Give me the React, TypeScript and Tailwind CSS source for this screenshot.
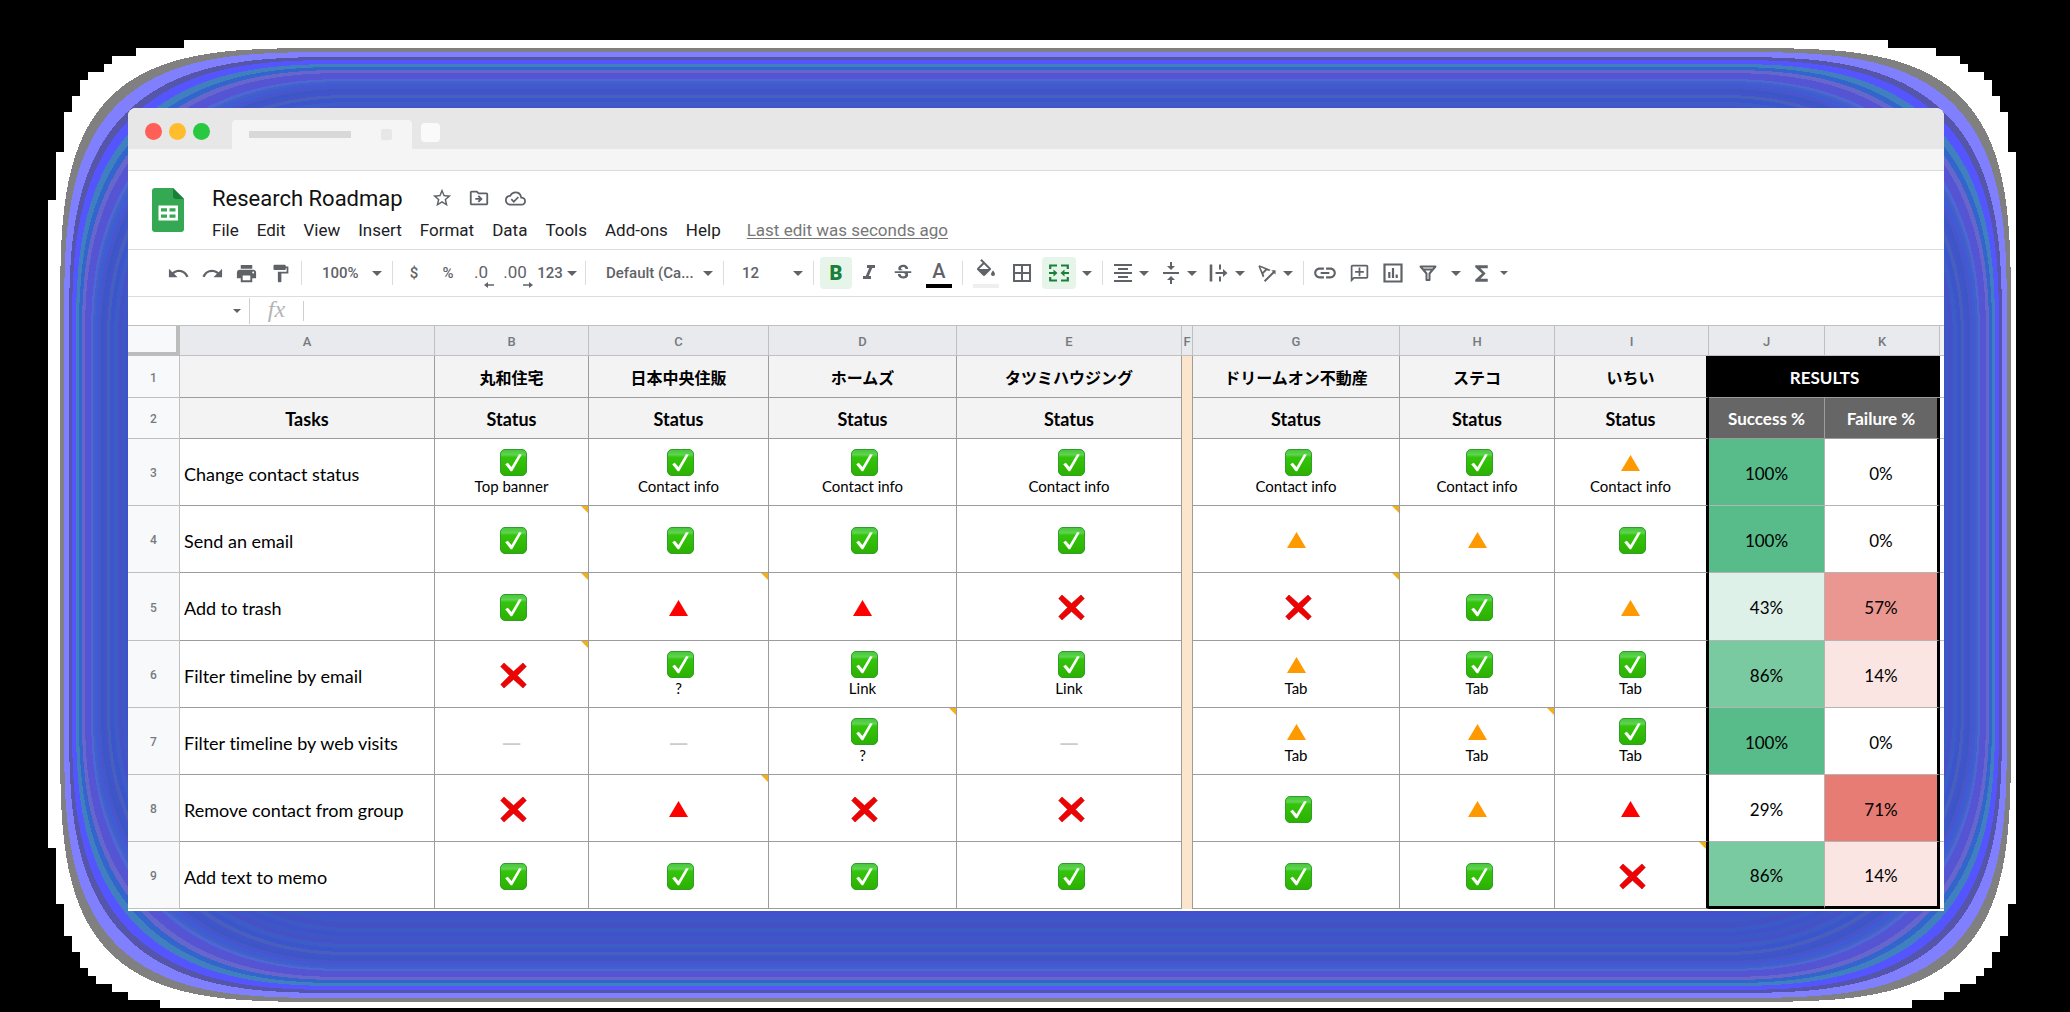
import React from "react";
import {
  MdUndo,
  MdRedo,
  MdPrint,
  MdFormatPaint,
  MdFormatItalic,
  MdStrikethroughS,
  MdBorderAll,
  MdFormatAlignCenter,
  MdVerticalAlignCenter,
  MdTextRotationAngleup,
  MdLink,
  MdOutlineAddComment,
  MdOutlineInsertChart,
  MdFunctions,
  MdStarBorder,
  MdOutlineDriveFileMove,
  MdOutlineCloudDone,
} from "react-icons/md";

/* ---------- Backdrop glow ---------- */

const BANDS: [number, number, string][] = [
  [48, 3.7, "#808080"],
  [52, 3.4, "#8080ff"],
  [57, 3.1, "#5555aa"],
  [60, 2.95, "#5555ff"],
  [64, 2.78, "#4080bf"],
  [67, 2.65, "#3366cc"],
  [70, 2.57, "#6666cc"],
  [73, 2.5, "#5555d4"],
  [79, 2.4, "#4c68d8"],
  [81, 2.36, "#4760c4"],
  [83, 2.33, "#3d5cd6"],
  [86, 2.28, "#4a55cc"],
  [89, 2.25, "#3a57c6"],
  [92, 2.22, "#4453cb"],
  [95, 2.2, "#4560bd"],
  [98, 2.17, "#3c54cc"],
  [102, 2.14, "#3d5cc6"],
  [106, 2.1, "#4650c8"],
  [110, 2.08, "#3d57c4"],
  [114, 2.06, "#3f52cc"],
  [118, 2.04, "#3c5ac4"],
  [122, 2.02, "#4450c6"],
  [127, 2, "#3d57c4"],
  [132, 2, "#4052cc"],
];

function bandPath(top: number, n: number) {
  const left = top + 12;
  const cx = 350;
  const cy = 340;
  const a = cx - left;
  const b = cy - top;
  const quarter: [number, number][] = [];
  for (let i = 0; i <= 48; i++) {
    const t = (i / 48) * (Math.PI / 2);
    quarter.push([
      cx - a * Math.pow(Math.max(0, Math.cos(t)), 2 / n),
      cy - b * Math.pow(Math.max(0, Math.sin(t)), 2 / n),
    ]);
  }
  const back = [...quarter].reverse();
  const all = [
    ...quarter,
    ...back.map(([x, y]) => [2071 - x, y]),
    ...quarter.map(([x, y]) => [2071 - x, 1050 - y]),
    ...back.map(([x, y]) => [x, 1050 - y]),
  ];
  return "M" + all.map(([x, y]) => `${x.toFixed(1)} ${y.toFixed(1)}`).join("L") + "Z";
}

function Backdrop() {
  return (
    <svg
      className="absolute inset-0 h-full w-full"
      viewBox="0 0 2070 1012"
      preserveAspectRatio="none"
      shapeRendering="crispEdges"
      aria-hidden="true"
    >
      <path
        fill="#fff"
        d="M184 40H1888V48H1936V56H1960V64H1968V72H1984V80H1992V96H2000V112H2008V152H2016V904H2008V936H2000V952H1992V968H1984V976H1976V984H1960V992H1944V1000H1912V1008H160V1000H128V992H112V984H96V976H88V968H80V952H72V936H64V904H56V848H48V200H56V152H64V112H72V96H80V80H88V72H104V64H112V56H136V48H184Z"
      />
      {BANDS.map(([top, n, color]) => (
        <path key={top} d={bandPath(top, n)} fill={color} />
      ))}
    </svg>
  );
}

/* ---------- Small drawings ---------- */

function Caret({ small = false }: { small?: boolean }) {
  return (
    <svg className={small ? "h-1 w-2 shrink-0" : "h-[5px] w-2.5 shrink-0"} viewBox="0 0 10 5" preserveAspectRatio="none" aria-hidden="true">
      <path d="M0 0h10L5 5z" fill="#5f6368" />
    </svg>
  );
}

function Check() {
  return (
    <svg className="ml-1 h-[27px] w-[27px]" viewBox="0 0 27 27" role="img" aria-label="Passed">
      <defs>
        <linearGradient id="chk" x1="0" y1="0" x2="0" y2="1">
          <stop offset="0" stopColor="#46c53a" />
          <stop offset="0.2" stopColor="#5fd44f" />
          <stop offset="0.3" stopColor="#34c40c" />
          <stop offset="1" stopColor="#2cb000" />
        </linearGradient>
      </defs>
      <rect x="0.5" y="0.5" width="26" height="26" rx="4.5" fill="url(#chk)" stroke="#2f9e2a" />
      <path d="M5.2 15.2l2.6-1.5 3.7 4.2L19 5.2l2.8.3-9.6 16.7h-1.5z" fill="#fff" />
    </svg>
  );
}

function Cross() {
  return (
    <svg className="ml-1 h-[27px] w-[27px]" viewBox="0 0 27 27" role="img" aria-label="Failed">
      <path
        d="M4 1L13.5 9.6 23 1l3.3 3.6-8.9 8.9 8.9 8.9L23 26l-9.500-8.600L4 26 .7 22.400l8.900-8.900L.7 4.600z"
        fill="#ec0404"
        stroke="#d40000"
        strokeWidth="0.6"
        strokeLinejoin="round"
      />
    </svg>
  );
}

function Triangle({ color, label }: { color: string; label: string }) {
  return (
    <span className="flex h-[27px] items-center">
      <svg className="h-4 w-[19px]" viewBox="0 0 19 16" role="img" aria-label={label}>
        <path d="M9.500 0L19 16H0z" fill={color} />
      </svg>
    </span>
  );
}

/* ---------- Toolbar ---------- */

const Sep = () => <span className="mx-1 h-6 w-px shrink-0 bg-[#dadce0]" />;

function Tool({ label, className = "w-[34px]", children }: { label: string; className?: string; children: React.ReactNode }) {
  return (
    <button type="button" aria-label={label} className={`flex h-8 shrink-0 items-center justify-center ${className}`}>
      {children}
    </button>
  );
}

function MenuTool({ label, children }: { label: string; children: React.ReactNode }) {
  return (
    <button type="button" aria-label={label} className="flex h-8 w-12 shrink-0 items-center gap-1 pl-1">
      {children}
      <Caret />
    </button>
  );
}

function Picker({ label, value, className }: { label: string; value: string; className: string }) {
  return (
    <label className={`flex h-8 shrink-0 items-center pr-1.5 ${className}`}>
      <select aria-label={label} className="min-w-0 flex-1 appearance-none bg-transparent outline-none">
        <option>{value}</option>
      </select>
      <Caret />
    </label>
  );
}

function Decimals({ text, right }: { text: string; right?: boolean }) {
  return (
    <span className="relative text-[17px] font-normal">
      {text}
      <svg className="absolute -right-1.5 -bottom-0.5 h-1.5 w-2.5" viewBox="0 0 10 6" aria-hidden="true">
        <path d={right ? "M0 2.200h6V0l4 3-4 3V3.800H0z" : "M10 2.200H4V0L0 3l4 3V3.800h6z"} fill="#5f6368" />
      </svg>
    </span>
  );
}

function Toolbar() {
  return (
    <div role="toolbar" className="flex h-[47px] items-center overflow-hidden border-b border-[#dcdcdc] pl-[33px] text-[15px] font-medium text-[#5f6368]">
      <Tool label="Undo"><MdUndo size={23} /></Tool>
      <Tool label="Redo"><MdRedo size={23} /></Tool>
      <Tool label="Print"><MdPrint size={23} /></Tool>
      <Tool label="Paint format"><MdFormatPaint size={21} /></Tool>
      <Sep />
      <Picker label="Zoom" value="100%" className="w-[82px] pl-4" />
      <Sep />
      <Tool label="Format as currency">$</Tool>
      <Tool label="Format as percent">%</Tool>
      <Tool label="Decrease decimal places" className="w-8"><Decimals text=".0" /></Tool>
      <Tool label="Increase decimal places" className="w-9"><Decimals text=".00" right /></Tool>
      <Tool label="More formats" className="w-12 gap-1">123<Caret /></Tool>
      <Sep />
      <Picker label="Font" value="Default (Ca..." className="w-[129px] pl-4" />
      <Sep />
      <Picker label="Font size" value="12" className="w-[81px] pl-3.5" />
      <Sep />
      <Tool label="Bold" className="ml-0.5 w-8 rounded-sm bg-[#e6f4ea] text-xl font-black text-[#188038]">B</Tool>
      <Tool label="Italic"><MdFormatItalic size={24} /></Tool>
      <Tool label="Strikethrough"><MdStrikethroughS size={22} /></Tool>
      <Tool label="Text color" className="w-[38px]">
        <span className="flex w-[26px] flex-col items-center border-b-4 border-black text-xl leading-[25px]">A</span>
      </Tool>
      <Sep />
      <Tool label="Fill color" className="w-[38px]">
        <span className="flex w-[26px] flex-col items-center border-b-4 border-[#efefef] pb-[5px]">
          <svg className="h-5 w-6" viewBox="0 0 24 20" aria-hidden="true">
            <path
              fill="#5f6368"
              d="M16.560 8.940L7.620 0 6.210 1.410l2.380 2.380-5.150 5.150c-.590.590-.590 1.540 0 2.120l5.500 5.500c.290.290.680.440 1.060.440s.770-.150 1.060-.440l5.500-5.500c.590-.580.590-1.530 0-2.120zM5.210 10L10 5.210 14.790 10zM19 11.500s-2 2.170-2 3.500c0 1.100.900 2 2 2s2-.900 2-2c0-1.330-2-3.500-2-3.500z"
            />
          </svg>
        </span>
      </Tool>
      <Tool label="Borders"><MdBorderAll size={24} /></Tool>
      <Tool label="Merge cells" className="ml-[3px] w-[34px] rounded-sm bg-[#e6f4ea]">
        <svg className="h-6 w-6" viewBox="0 0 24 24" fill="none" stroke="#188038" strokeWidth="2.200" aria-hidden="true">
          <path d="M10 4.500H3.200V8M14 4.500h6.800V8M10 19.500H3.200V16M14 19.500h6.800V16M2 12h5M22 12h-5" />
          <path d="M6.500 8.500L10.500 12l-4 3.500zM17.500 8.500L13.500 12l4 3.500z" fill="#188038" stroke="none" />
        </svg>
      </Tool>
      <Tool label="Merge options" className="w-[22px]"><Caret /></Tool>
      <Sep />
      <MenuTool label="Horizontal align"><MdFormatAlignCenter size={24} /></MenuTool>
      <MenuTool label="Vertical align"><MdVerticalAlignCenter size={24} /></MenuTool>
      <MenuTool label="Text wrapping">
        <svg className="h-6 w-6" viewBox="0 0 24 24" fill="none" stroke="#5f6368" strokeWidth="2" aria-hidden="true">
          <path d="M4 3.500v17" strokeWidth="2.600" />
          <path d="M13 3.500v5M13 15.500v5M8.500 12H18" />
          <path d="M16 8l4.500 4-4.500 4z" fill="#5f6368" stroke="none" />
        </svg>
      </MenuTool>
      <MenuTool label="Text rotation"><MdTextRotationAngleup size={24} /></MenuTool>
      <Sep />
      <Tool label="Insert link"><MdLink size={26} /></Tool>
      <Tool label="Insert comment"><MdOutlineAddComment size={21} className="-scale-x-100" /></Tool>
      <Tool label="Insert chart">
        <svg className="h-5 w-5" viewBox="0 0 20 20" fill="none" stroke="#5f6368" strokeWidth="2.200" aria-hidden="true">
          <path d="M1.500 1.500h17v17h-17zM6.300 15V9M10 15V5M13.700 15v-3.500" />
        </svg>
      </Tool>
      <Tool label="Filter" className="w-9">
        <svg className="h-5 w-5" viewBox="0 0 20 20" fill="none" stroke="#5f6368" strokeWidth="2" aria-hidden="true">
          <path d="M2.500 3.500h15l-6 7V17h-3v-6.500zM5 6.500h10" strokeLinejoin="round" />
        </svg>
      </Tool>
      <Tool label="Filter views" className="w-5"><Caret /></Tool>
      <Tool label="Functions" className="w-[30px]"><MdFunctions size={25} /></Tool>
      <Tool label="More functions" className="w-4"><Caret small /></Tool>
    </div>
  );
}

/* ---------- Sheet ---------- */

type Mark = "ok" | "no" | "warn" | "bad" | "none";
type Cell = [mark: Mark, text?: string, note?: boolean];

const COLS = [
  "w-[52px]", "w-[255px]", "w-[154px]", "w-[180px]", "w-[188px]", "w-[225px]", "w-[11px]",
  "w-[207px]", "w-[155px]", "w-[154px]", "w-[116px]", "w-[115px]", "w-[4px]",
];
const LETTERS = ["A", "B", "C", "D", "E", "F", "G", "H", "I", "J", "K"];
const COMPANIES = ["丸和住宅", "日本中央住販", "ホームズ", "タツミハウジング", "ドリームオン不動産", "ステコ", "いちい"];

const ROWS: { task: string; cells: Cell[]; ok: [string, string]; fail: [string, string] }[] = [
  {
    task: "Change contact status",
    cells: [["ok", "Top banner"], ["ok", "Contact info"], ["ok", "Contact info"], ["ok", "Contact info"], ["ok", "Contact info"], ["ok", "Contact info"], ["warn", "Contact info"]],
    ok: ["100%", "bg-[#57bb8a]"],
    fail: ["0%", "bg-white"],
  },
  {
    task: "Send an email",
    cells: [["ok", "", true], ["ok"], ["ok"], ["ok"], ["warn", "", true], ["warn"], ["ok"]],
    ok: ["100%", "bg-[#57bb8a]"],
    fail: ["0%", "bg-white"],
  },
  {
    task: "Add to trash",
    cells: [["ok", "", true], ["bad", "", true], ["bad"], ["no"], ["no", "", true], ["ok"], ["warn"]],
    ok: ["43%", "bg-[#def1e8]"],
    fail: ["57%", "bg-[#eb9791]"],
  },
  {
    task: "Filter timeline by email",
    cells: [["no", "", true], ["ok", "?"], ["ok", "Link"], ["ok", "Link"], ["warn", "Tab"], ["ok", "Tab"], ["ok", "Tab"]],
    ok: ["86%", "bg-[#79c9a1]"],
    fail: ["14%", "bg-[#fae5e3]"],
  },
  {
    task: "Filter timeline by web visits",
    cells: [["none"], ["none"], ["ok", "?", true], ["none"], ["warn", "Tab"], ["warn", "Tab", true], ["ok", "Tab"]],
    ok: ["100%", "bg-[#57bb8a]"],
    fail: ["0%", "bg-white"],
  },
  {
    task: "Remove contact from group",
    cells: [["no"], ["bad", "", true], ["no"], ["no"], ["ok"], ["warn"], ["bad"]],
    ok: ["29%", "bg-white"],
    fail: ["71%", "bg-[#e67c73]"],
  },
  {
    task: "Add text to memo",
    cells: [["ok"], ["ok"], ["ok"], ["ok"], ["ok"], ["ok"], ["no", "", true]],
    ok: ["86%", "bg-[#79c9a1]"],
    fail: ["14%", "bg-[#fae5e3]"],
  },
];

function StatusCell({ cell, last }: { cell: Cell; last: boolean }) {
  const [mark, text, note] = cell;
  return (
    <td className={`relative border-b border-b-[#9c9c9c] px-0 pt-0.5 pb-0 ${last ? "border-r-[3px] border-r-black" : "border-r border-r-[#9c9c9c]"}`}>
      <div className="flex flex-col items-center justify-center">
        {mark === "ok" && <Check />}
        {mark === "no" && <Cross />}
        {mark === "warn" && <Triangle color="#ff9900" label="Partly" />}
        {mark === "bad" && <Triangle color="#ff0000" label="Poor" />}
        {mark === "none" && <span className="text-[26px] text-[#cccccc]">—</span>}
        {text && <span className="text-[15px] leading-[21px]">{text}</span>}
      </div>
      {note && (
        <svg className="absolute top-0 right-0 h-[7px] w-[7px]" viewBox="0 0 7 7" aria-hidden="true">
          <path d="M0 0h7v7z" fill="#f0b21c" />
        </svg>
      )}
    </td>
  );
}

const headCell = "border-r border-b border-[#9c9c9c] bg-[#f3f3f3] px-0 pt-0.5 pb-0 font-bold";
const numCell = "border-r border-b border-[#c0c0c0] bg-[#f8f9fb] px-0 pt-0.5 pb-0 text-xs font-medium text-[#76797d] font-[Roboto,sans-serif]";
const stripe = "border-r border-[#9c9c9c] bg-[#fce5cd] p-0";

function Sheet() {
  return (
    <table className="w-full table-fixed border-separate border-spacing-0 text-center text-[17px] leading-6 text-black [font-variant-ligatures:none] font-[Lato,'Noto_Sans_CJK_JP',sans-serif]">
      <colgroup>
        {COLS.map((w, i) => (
          <col key={i} className={w} />
        ))}
      </colgroup>
      <thead>
        <tr className="h-[30px] text-[13px] text-[#76797d] font-[Roboto,sans-serif]">
          <td className="border-r-4 border-b-4 border-[#bcbcbc] bg-[#f8f9fb] p-0" />
          {LETTERS.map((l) => (
            <th key={l} scope="col" className="border-r border-b border-[#c0c0c0] bg-[#e8eaed] px-0 pt-0.5 pb-0 font-medium">
              {l}
            </th>
          ))}
          <td className="border-b border-[#c0c0c0] bg-[#f3f3f3] p-0" />
        </tr>
      </thead>
      <tbody>
        <tr className="h-[42px]">
          <th scope="row" className={numCell}>1</th>
          <td className={headCell} />
          {COMPANIES.slice(0, 4).map((c) => (
            <th key={c} className={`${headCell} text-base`}>{c}</th>
          ))}
          <td className={stripe} />
          {COMPANIES.slice(4, 6).map((c) => (
            <th key={c} className={`${headCell} text-base`}>{c}</th>
          ))}
          <th className="border-r-[3px] border-b border-r-black border-b-[#9c9c9c] bg-[#f3f3f3] px-0 pt-0.5 pb-0 text-base font-bold">{COMPANIES[6]}</th>
          <th colSpan={2} className="border-b border-[#9c9c9c] bg-black px-0 pt-0.5 pb-0 font-bold text-white">RESULTS</th>
          <td className="border-b border-[#c0c0c0] bg-white p-0" />
        </tr>
        <tr className="h-[41px]">
          <th scope="row" className={numCell}>2</th>
          <th className={`${headCell} text-lg leading-6`}>Tasks</th>
          {[0, 1, 2, 3].map((i) => (
            <th key={i} className={`${headCell} text-lg leading-6`}>Status</th>
          ))}
          <td className={stripe} />
          <th className={`${headCell} text-lg leading-6`}>Status</th>
          <th className={`${headCell} text-lg leading-6`}>Status</th>
          <th className="border-r-[3px] border-b border-r-black border-b-[#9c9c9c] bg-[#f3f3f3] px-0 pt-0.5 pb-0 text-lg leading-6 font-bold">Status</th>
          <th className="border-r border-b border-[#9c9c9c] bg-[#666666] px-0 pt-0.5 pb-0 font-bold text-white">Success %</th>
          <th className="border-r-[3px] border-b border-r-black border-b-[#9c9c9c] bg-[#666666] px-0 pt-0.5 pb-0 font-bold text-white">Failure %</th>
          <td className="border-b border-[#c0c0c0] bg-white p-0" />
        </tr>
        {ROWS.map((row, r) => {
          const bottom = r === ROWS.length - 1 ? "border-b-[3px] border-b-black" : "border-b border-b-[#b4b4b4]";
          return (
            <tr key={row.task} className={r === 2 ? "h-[68px]" : "h-[67px]"}>
              <th scope="row" className={numCell}>{r + 3}</th>
              <td className="border-r border-b border-[#9c9c9c] pt-[3px] pr-0 pb-0 pl-1 text-left text-lg leading-6 whitespace-nowrap">{row.task}</td>
              {row.cells.slice(0, 4).map((c, i) => (
                <StatusCell key={i} cell={c} last={false} />
              ))}
              <td className={stripe} />
              {row.cells.slice(4).map((c, i) => (
                <StatusCell key={i} cell={c} last={i === 2} />
              ))}
              <td className={`border-r border-r-[#b4b4b4] px-0 pt-[3px] pb-0 ${bottom} ${row.ok[1]}`}>{row.ok[0]}</td>
              <td className={`border-r-[3px] border-r-black px-0 pt-[3px] pb-0 ${bottom} ${row.fail[1]}`}>{row.fail[0]}</td>
              <td className="border-b border-[#c0c0c0] bg-white p-0" />
            </tr>
          );
        })}
      </tbody>
    </table>
  );
}

/* ---------- Window ---------- */

const MENUS = ["File", "Edit", "View", "Insert", "Format", "Data", "Tools", "Add-ons", "Help"];

export default function App() {
  return (
    <div className="relative min-h-screen bg-black pt-[108px] pr-[126px] pl-32 font-[Roboto,sans-serif]">
      <Backdrop />
      <main className="relative overflow-hidden rounded-t-lg bg-white pb-[2px]">
        <div className="flex h-[41px] items-end bg-[#e7e7e7] pl-[17px]">
          <div className="flex gap-[7px] self-center pt-1.5">
            <span className="h-[17px] w-[17px] rounded-full bg-[#ff5f57]" />
            <span className="h-[17px] w-[17px] rounded-full bg-[#ffbd2e]" />
            <span className="h-[17px] w-[17px] rounded-full bg-[#28c840]" />
          </div>
          <div className="ml-[22px] flex h-[29px] w-[180px] items-center justify-between rounded-t bg-[#f5f5f5] pr-5 pl-[17px]">
            <span className="h-[7px] w-[102px] bg-[#d8d8d8]" />
            <span className="h-[11px] w-[11px] rounded-xs bg-[#e7e7e7]" />
          </div>
          <span className="mb-[7px] ml-[9px] h-[19px] w-[19px] rounded bg-[#fafafa]" />
        </div>
        <div className="h-[22px] border-b border-[#dcdcdc] bg-[#f5f5f5]" />

        <header className="flex h-[79px] items-start border-b border-[#dcdcdc] pl-6">
          <svg className="mt-[17px] h-11 w-8 shrink-0" viewBox="0 0 32 44" role="img" aria-label="Sheets">
            <path d="M3 0h18l11 11v30a3 3 0 0 1-3 3H3a3 3 0 0 1-3-3V3a3 3 0 0 1 3-3z" fill="#34a853" />
            <path d="M21 0l11 11H24a3 3 0 0 1-3-3z" fill="#188038" />
            <path d="M6.500 17.500h19.500v15H6.500z" fill="#fff" />
            <path d="M9 20.300h6v3.300H9zM17.500 20.300h6v3.300h-6zM9 26.500h6v3.300H9zM17.500 26.500h6v3.300h-6z" fill="#34a853" />
          </svg>
          <div className="ml-7 flex flex-col pt-[11px]">
            <div className="flex h-8 items-center text-[#5f6368]">
              <h1 className="text-[22px] text-[#111111]">Research Roadmap</h1>
              <div className="ml-7 flex gap-[15px]">
                <button type="button" aria-label="Star"><MdStarBorder size={22} /></button>
                <button type="button" aria-label="Move"><MdOutlineDriveFileMove size={22} /></button>
                <button type="button" aria-label="Saved"><MdOutlineCloudDone size={21} /></button>
              </div>
            </div>
            <nav className="flex h-[34px] items-center gap-[18px] text-[17px] text-[#202124]">
              {MENUS.map((m) => (
                <button key={m} type="button">{m}</button>
              ))}
              <a href="#history" className="ml-2 text-[#777777] underline underline-offset-2">Last edit was seconds ago</a>
            </nav>
          </div>
        </header>

        <Toolbar />

        <div className="flex h-[29px] items-center border-b border-[#c0c0c0]">
          <label className="flex h-[26px] w-[122px] items-center border-r border-[#cfcfcf] pr-2">
            <input aria-label="Name box" className="min-w-0 flex-1 bg-transparent outline-none" />
            <Caret small />
          </label>
          <label htmlFor="formula" className="w-[53px] pb-1 text-center text-2xl leading-6 text-[#b4b4b4] italic font-['Liberation_Serif',serif]">fx</label>
          <span className="h-5 w-px bg-[#cfcfcf]" />
          <input id="formula" className="h-6 flex-1 bg-transparent px-2 outline-none" />
        </div>

        <Sheet />
      </main>
    </div>
  );
}
